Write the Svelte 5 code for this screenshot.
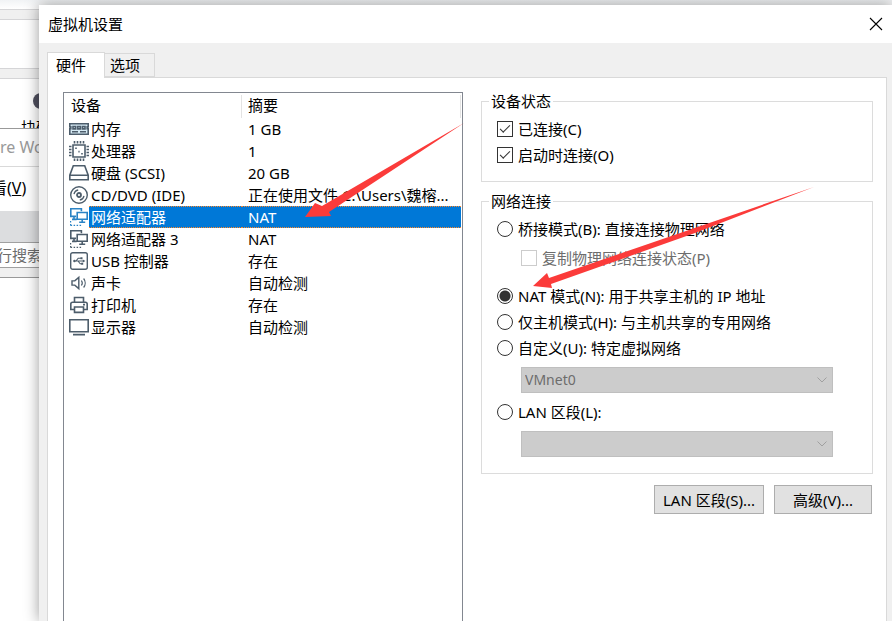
<script lang="ts">
  type Device = { icon: string; name: string; summary: string };

  const devices: Device[] = [
    { icon: 'memory', name: '内存', summary: '1 GB' },
    { icon: 'cpu', name: '处理器', summary: '1' },
    { icon: 'disk', name: '硬盘 (SCSI)', summary: '20 GB' },
    { icon: 'cd', name: 'CD/DVD (IDE)', summary: '正在使用文件 C:\\Users\\魏榕...' },
    { icon: 'network', name: '网络适配器', summary: 'NAT' },
    { icon: 'network', name: '网络适配器 3', summary: 'NAT' },
    { icon: 'usb', name: 'USB 控制器', summary: '存在' },
    { icon: 'sound', name: '声卡', summary: '自动检测' },
    { icon: 'printer', name: '打印机', summary: '存在' },
    { icon: 'display', name: '显示器', summary: '自动检测' },
  ];

  let selected = $state(4);
  let connected = $state(true);
  let connectAtPowerOn = $state(true);
  let mode = $state('nat');
</script>

<div class="desktop">
  <div class="back-window">
    <div class="strip"></div>
    <div class="blank"></div>
    <div class="strip"></div>
    <div class="shortcut">
      <i></i>
      <span>块码</span>
    </div>
  </div>

  <div class="main-window">
    <div class="app-title">re Wo</div>
    <div class="menu">看(<u>V</u>)</div>
    <div class="toolbar"></div>
    <div class="search">行搜索</div>
    <div class="divider"></div>
  </div>

  <div class="dialog">
    <header>
      <h1>虚拟机设置</h1>
      <button class="close" aria-label="关闭">
        <svg width="14" height="14" viewBox="0 0 14 14"><path d="M1 1l12 12M13 1L1 13" stroke="#000" stroke-width="1.1" /></svg>
      </button>
    </header>

    <div class="tabs" role="tablist">
      <button class="tab active" role="tab" aria-selected="true">硬件</button>
      <button class="tab" role="tab" aria-selected="false">选项</button>
    </div>

    <div class="panel">
      <div class="list">
        <table>
          <colgroup>
            <col class="col-icon" />
            <col class="col-name" />
            <col />
          </colgroup>
          <thead>
            <tr>
              <th colspan="2">设备</th>
              <th class="summary">摘要</th>
            </tr>
          </thead>
          <tbody>
            {#each devices as device, i}
              <tr class:selected={i === selected} onclick={() => (selected = i)}>
                <td class="icon">
                  <svg width="20" height="20" viewBox="0 0 20 20" fill="none" stroke="currentColor" stroke-width="1.6">
                    {#if device.icon === 'memory'}
                      <path d="M.8 4.8h18.4v3h-1v1.8h1v5.6H.8V9.6h1V7.8h-1z" fill="#d5e9f3" />
                      <path d="M4 7.5h2.6v2.4H4zM8.7 7.5h2.6v2.4H8.7zM13.4 7.5H16v2.4h-2.6z" />
                      <path d="M3 12.8h6M11 12.8h6" />
                    {:else if device.icon === 'cpu'}
                      <path d="M4 4h12v12H4z" />
                      <path d="M5.5 0v2.5M8.5 0v2.5M11.5 0v2.5M14.5 0v2.5M5.5 17.5V20M8.5 17.5V20M11.5 17.5V20M14.5 17.5V20M0 5.5h2.5M0 8.5h2.5M0 11.5h2.5M0 14.5h2.5M17.5 5.5H20M17.5 8.5H20M17.5 11.5H20M17.5 14.5H20" />
                      <path d="M6.2 7.2h1.6M12.2 12.8h1.6M9.4 10.6h1.2" />
                    {:else if device.icon === 'disk'}
                      <path d="M4.3 2.8h11.4l3.5 9.4v4.5H.8v-4.5zM.8 12.2h18.4" />
                    {:else if device.icon === 'cd'}
                      <circle cx="10" cy="10" r="8.3" stroke-width="1.4" />
                      <circle cx="10" cy="10" r="2" stroke-width="1.8" />
                      <path d="M5 9.2A5.3 5.3 0 0 1 9.2 5M15 10.8a5.3 5.3 0 0 1-4.2 4.2" stroke-width="1.3" />
                    {:else if device.icon === 'network'}
                      <path d="M7 9.4H1.8V1.8h10.6v2.4" />
                      <path d="M8.2 5.5h10v6.7h-10zM13.2 12.2v2.6M10.2 15.2h6M3 12.4h4.6M5 9.4v3" />
                      <path d="M1.6 14v4.5M1.6 18.4h11" stroke-dasharray="1.5 1.5" stroke-width="1.2" />
                    {:else if device.icon === 'usb'}
                      <rect x="1.7" y="1.7" width="16.6" height="16.6" rx="2" stroke-width="1.4" />
                      <path d="M5 10h10M7 10l2.2-2.8H12M9 10l2.2 2.8H13" stroke-width="1.1" />
                      <circle cx="5.4" cy="10" r="1.2" fill="currentColor" stroke="none" />
                      <path d="M13.8 8.6l2.6 1.4-2.6 1.4zM11.5 6.2h2v2h-2zM12.2 11.8h2v2h-2z" fill="currentColor" stroke="none" />
                    {:else if device.icon === 'sound'}
                      <path d="M3 7.9h2.8L9.8 4.4v11.2l-4-3.5H3z" stroke-width="1.4" />
                      <path d="M12.4 7.5c1 1.4 1 3.6 0 5M14.6 5.5c2.1 2.6 2.1 6.4 0 9" stroke-width="1.2" />
                    {:else if device.icon === 'printer'}
                      <path d="M5.5 7V2.5h9V7M5 14.5H1.8V9q0-1.8 1.8-1.8h12.8q1.8 0 1.8 1.8v5.5H15" />
                      <path d="M5.5 12h9v5.4h-9zM14 9.6h2" />
                    {:else}
                      <path d="M.8 2.8h18.4v12H.8zM4 17.6h12" />
                    {/if}
                  </svg>
                </td>
                <td class="name">{device.name}</td>
                <td class="summary">{device.summary}</td>
              </tr>
            {/each}
          </tbody>
        </table>
      </div>

      <div class="settings">
        <fieldset>
          <legend>设备状态</legend>
          <label><input type="checkbox" bind:checked={connected} />已连接(C)</label>
          <label><input type="checkbox" bind:checked={connectAtPowerOn} />启动时连接(O)</label>
        </fieldset>

        <fieldset class="network">
          <legend>网络连接</legend>
          <label><input type="radio" value="bridged" bind:group={mode} />桥接模式(B): 直接连接物理网络</label>
          <label class="replicate"><input type="checkbox" disabled />复制物理网络连接状态(P)</label>
          <label><input type="radio" value="nat" bind:group={mode} />NAT 模式(N): 用于共享主机的 IP 地址</label>
          <label><input type="radio" value="hostonly" bind:group={mode} />仅主机模式(H): 与主机共享的专用网络</label>
          <label><input type="radio" value="custom" bind:group={mode} />自定义(U): 特定虚拟网络</label>
          <div class="select">
            <select disabled aria-label="特定虚拟网络"><option>VMnet0</option></select>
            <svg width="10" height="6" viewBox="0 0 10 6"><path d="M.5.5L5 5 9.5.5" fill="none" stroke="#a0a0a0" /></svg>
          </div>
          <label><input type="radio" value="lan" bind:group={mode} />LAN 区段(L):</label>
          <div class="select">
            <select disabled aria-label="LAN 区段"><option></option></select>
            <svg width="10" height="6" viewBox="0 0 10 6"><path d="M.5.5L5 5 9.5.5" fill="none" stroke="#a0a0a0" /></svg>
          </div>
        </fieldset>

        <div class="actions">
          <button class="wide">LAN 区段(S)...</button>
          <button>高级(V)...</button>
        </div>
      </div>
    </div>
  </div>

  <svg class="arrows" width="892" height="621" viewBox="0 0 892 621" fill="#fb3b3a">
    <path d="M464 123L322 206 315 203 305 217 331 216 329 212z" />
    <path d="M814 187L549 278 547 273 533 286 552 288 551 284 695 233z" />
  </svg>
</div>

<style>
  :global(body) {
    margin: 0;
    background: #fff;
  }

  .desktop {
    position: relative;
    height: 100vh;
    overflow: hidden;
    font: 15px/20px 'Noto Sans', 'Noto Sans CJK SC', sans-serif;
    color: #000;
    background: linear-gradient(#f1f3f5, #fff 9px);
  }

  button,
  select,
  input {
    font: inherit;
    color: inherit;
    margin: 0;
    box-sizing: border-box;
  }

  .back-window {
    position: absolute;
    top: 9px;
    left: 0;
    width: 39px;
    height: 119px;
    overflow: hidden;
    background: #fff;
  }

  .strip {
    height: 9px;
    border: solid #d5d5d7;
    border-width: 1px 0;
    background: #f0f0f0;
  }

  .blank {
    height: 48px;
  }

  .shortcut {
    display: flex;
    flex-direction: column;
    gap: 8px;
    padding: 14px 0 0 21px;
  }

  .shortcut i {
    width: 16px;
    height: 16px;
    margin-left: 12px;
    border-radius: 8px;
    background: #50505f;
  }

  .shortcut span {
    white-space: nowrap;
  }

  .main-window {
    position: absolute;
    top: 128px;
    left: 0;
    bottom: 0;
    width: 39px;
    overflow: hidden;
    white-space: nowrap;
    border-top: 1px solid #999;
    background: #fff;
  }

  .app-title {
    height: 37px;
    line-height: 37px;
    font-size: 16px;
    color: #999;
    border-bottom: 1px solid #d9d9d9;
  }

  .menu {
    height: 44px;
    line-height: 42px;
    margin-left: -9px;
    font-size: 16px;
  }

  .toolbar {
    height: 31px;
    background: #dcdddf;
  }

  .search {
    height: 24px;
    line-height: 24px;
    margin-left: -3px;
    color: #6d6d6d;
    border: solid #a0a0a0;
    border-width: 1px 0;
  }

  .divider {
    height: 9px;
    border-bottom: 1px solid #999;
    background: #f0f0f0;
  }

  .dialog {
    position: absolute;
    inset: 5px 0 0 39px;
    display: flex;
    flex-direction: column;
    background: #f0f0f0;
    box-shadow: 0 0 14px rgba(0, 0, 0, 0.4);
  }

  header {
    display: flex;
    justify-content: space-between;
    align-items: center;
    height: 38px;
    padding: 0 9px;
    background: #fff;
  }

  h1 {
    margin: 0;
    font-size: 15px;
    font-weight: normal;
  }

  .close {
    display: flex;
    padding: 0;
    border: 0;
    background: none;
  }

  .tabs {
    display: flex;
    align-items: flex-end;
    height: 25px;
    margin-top: 9px;
    padding-left: 8px;
  }

  .tab {
    width: 50px;
    height: 24px;
    padding: 0 5px;
    text-align: left;
    line-height: 22px;
    border: 1px solid #d9d9d9;
    border-left: 0;
    background: #f0f0f0;
  }

  .tab.active {
    position: relative;
    width: 58px;
    height: 26px;
    margin-bottom: -1px;
    padding: 0 8px 2px;
    border-left: 1px solid #d9d9d9;
    border-bottom: 0;
    background: #fff;
    z-index: 1;
  }

  .panel {
    display: grid;
    grid-template-columns: 400fr 392fr;
    gap: 18px;
    flex: 1;
    margin: 0 5px 0 8px;
    padding: 14px 13px 0 15px;
    border: 1px solid #d9d9d9;
    border-bottom: 0;
    background: #fff;
  }

  .list {
    min-width: 0;
    padding-right: 1px;
    border: 1px solid #828790;
    border-bottom: 0;
  }

  table {
    width: 100%;
    margin-top: 2px;
    border-spacing: 0;
    table-layout: fixed;
  }

  .col-icon {
    width: 25px;
  }

  .col-name {
    width: 153px;
  }

  th {
    height: 23px;
    padding: 0 0 0 7px;
    box-sizing: border-box;
    line-height: 20px;
    text-align: left;
    font-weight: normal;
    vertical-align: top;
    border-right: 1px solid #e3e3e3;
  }

  td {
    height: 22px;
    padding: 0;
    box-sizing: border-box;
    line-height: 20px;
    white-space: nowrap;
  }

  .icon {
    padding-left: 5px;
    color: #4d5d6b;
  }

  .icon svg {
    display: block;
  }

  td.name {
    padding-left: 2px;
  }

  th.summary,
  td.summary {
    padding-left: 6px;
  }

  .selected .icon {
    color: #2a83c5;
  }

  .selected .name,
  .selected .summary {
    color: #fff;
    background: #0078d7;
    border: dotted #ff8728;
    border-width: 1px 0;
  }

  .settings {
    margin-top: -1px;
  }

  fieldset {
    min-width: 0;
    margin: 0 0 9px;
    padding: 5px 39px 13px 15px;
    border: 1px solid #dcdcdc;
  }

  .network {
    margin-bottom: 11px;
    padding-bottom: 16px;
  }

  legend {
    margin-left: -8px;
    padding: 0 2px;
    line-height: 20px;
  }

  label {
    display: flex;
    align-items: center;
    gap: 5px;
    height: 26px;
    white-space: nowrap;
  }

  input {
    appearance: none;
    flex: none;
    width: 16px;
    height: 16px;
    border: 1px solid #333;
    background: #fff;
  }

  input[type='checkbox']:checked {
    display: grid;
    place-items: center;
  }

  input[type='checkbox']:checked::before {
    content: '';
    width: 10px;
    height: 5px;
    margin-bottom: 3px;
    box-sizing: border-box;
    border: solid #333;
    border-width: 0 0 1px 1px;
    transform: rotate(-45deg);
  }

  input[type='radio'] {
    border-radius: 50%;
  }

  input[type='radio']:checked {
    background: radial-gradient(circle, #333 5px, #fff 6px);
  }

  input:disabled {
    border-color: #ccc;
  }

  .replicate {
    margin: 3px 0 12px 24px;
    color: #6d6d6d;
  }

  .select {
    position: relative;
    margin: 6px 0 6px 24px;
  }

  .select:last-child {
    margin-bottom: 0;
  }

  select {
    appearance: none;
    display: block;
    width: 100%;
    height: 26px;
    padding: 0 3px;
    font-size: 14px;
    border: 1px solid #bfbfbf;
    border-radius: 0;
    background: #ccc;
    color: #6d6d6d;
    opacity: 1;
  }

  .select svg {
    position: absolute;
    right: 6px;
    top: 10px;
  }

  .actions {
    display: flex;
    justify-content: flex-end;
    gap: 10px;
    padding-right: 1px;
  }

  .actions button {
    width: 98px;
    height: 29px;
    padding: 0;
    line-height: 26px;
    white-space: nowrap;
    border: 1px solid #adadad;
    background: #e1e1e1;
  }

  .actions .wide {
    width: 110px;
  }

  .arrows {
    position: absolute;
    top: 0;
    left: 0;
    pointer-events: none;
  }
</style>
